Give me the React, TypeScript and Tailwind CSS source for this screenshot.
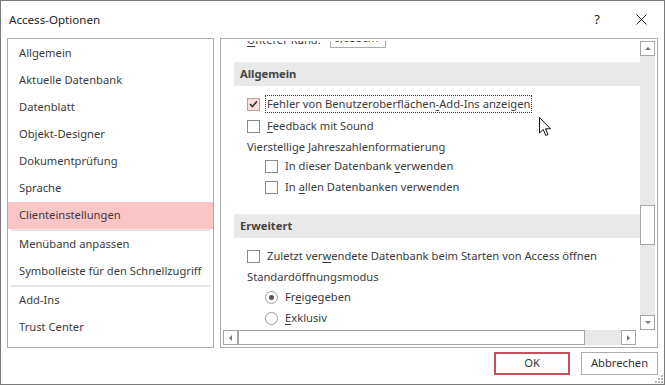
import React from 'react';

const font = { fontFamily: '"Noto Sans", "Open Sans", sans-serif' };

const navGroups: string[][] = [
  ['Allgemein', 'Aktuelle Datenbank', 'Datenblatt', 'Objekt-Designer', 'Dokumentprüfung', 'Sprache', 'Clienteinstellungen'],
  ['Menüband anpassen', 'Symbolleiste für den Schnellzugriff'],
  ['Add-Ins', 'Trust Center'],
];

const Key: React.FC<{ children: React.ReactNode }> = ({ children }) => (
  <span className="underline underline-offset-2">{children}</span>
);

const Checkbox: React.FC<{ checked?: boolean }> = ({ checked }) => (
  <span
    className={`flex h-[13px] w-[13px] shrink-0 items-center justify-center border ${
      checked ? 'border-[#b7a0a0] bg-[#fcdede]' : 'border-[#8a8a8a] bg-white'
    }`}
  >
    {checked && (
      <svg width="9" height="8" viewBox="0 0 9 8">
        <path d="M1 4.2 L3.4 6.5 L8 1.2" fill="none" stroke="#333" strokeWidth="1.6" />
      </svg>
    )}
  </span>
);

const Radio: React.FC<{ checked?: boolean }> = ({ checked }) => (
  <span className="flex h-[13px] w-[13px] shrink-0 items-center justify-center rounded-full border border-[#9a9a9a] bg-white">
    {checked && <span className="h-[5px] w-[5px] rounded-full bg-[#555]" />}
  </span>
);

const SectionHeader: React.FC<{ title: string; className?: string }> = ({ title, className }) => (
  <div className={`flex h-[24px] items-center bg-[#e9e9e9] pl-[6px] font-bold text-[#444] ${className ?? ''}`}>
    {title}
  </div>
);

const ScrollBtn: React.FC<{ dir: 'up' | 'down' | 'left' | 'right' }> = ({ dir }) => {
  const pts = {
    up: '1,5 4,2 7,5',
    down: '1,2 4,5 7,2',
    left: '5,1 2,4 5,7',
    right: '2,1 5,4 2,7',
  }[dir];
  return (
    <div className="flex h-[15px] w-[15px] shrink-0 items-center justify-center border border-[#a6a6a6] bg-white">
      <svg width="7" height="7" viewBox="0 0 7 7">
        <polygon points={pts} fill="#777" />
      </svg>
    </div>
  );
};

export default function App() {
  return (
    <div
      className="relative flex h-[385px] w-[665px] flex-col whitespace-nowrap border border-[#7a7a7a] bg-white text-[11.2px] text-[#3b3b3b]"
      style={font}
    >
      {/* title bar */}
      <div className="flex h-[37px] shrink-0 items-center pl-[8px] text-[#222]">
        <span className="text-[11.6px]">Access-Optionen</span>
        <span className="ml-auto mr-[36px] text-[13px]">?</span>
        <svg className="mr-[17px]" width="11" height="11" viewBox="0 0 11 11">
          <path d="M0.5 0.5 L10.5 10.5 M10.5 0.5 L0.5 10.5" stroke="#222" strokeWidth="1" />
        </svg>
      </div>

      {/* body */}
      <div className="flex h-[310px] shrink-0 pl-[6px]">
        <div className="w-[207px] border border-[#ababab] pt-[1px]">
          {navGroups.map((group, gi) => (
            <div key={gi} className={gi > 0 ? 'mx-[3px] border-t-2 border-[#e6e6e6]' : ''}>
              {group.map((item) => (
                <div
                  key={item}
                  className={`flex h-[27px] items-center pl-[11px] ${
                    item === 'Clienteinstellungen' ? 'bg-[#fcc5c5]' : ''
                  } ${gi > 0 ? '-mx-[3px]' : ''}`}
                >
                  {item}
                </div>
              ))}
            </div>
          ))}
        </div>

        <div className="ml-[6px] flex w-[438px] flex-col border border-[#ababab] p-[2px]">
          <div className="flex min-h-0 flex-1">
            <div className="min-w-0 flex-1 overflow-hidden">
              <div className="-mt-[15px] flex h-[22px] items-center pl-[24px]">
                <span className="mt-[6px]">
                  <Key>U</Key>nterer Rand:
                </span>
                <div className="ml-[9px] flex h-[22px] w-[56px] items-end border border-[#ababab] pl-[3px]">0,635cm</div>
              </div>
              <SectionHeader title="Allgemein" className="ml-[11px] mt-[14px]" />
              <div className="mt-[8px] flex h-[20px] items-center gap-[5px] pl-[24px]">
                <Checkbox checked />
                <span className="border border-dotted border-[#333] px-[1px] leading-[16px]">
                  Fehler von Benutzeroberflächen<Key>-</Key>Add-Ins anzeigen
                </span>
              </div>
              <div className="flex h-[24px] items-center gap-[5px] pl-[24px]">
                <Checkbox />
                <span className="pl-[2px]">
                  <Key>F</Key>eedback mit Sound
                </span>
              </div>
              <div className="flex h-[18px] items-center pl-[24px]">Vierstellige Jahreszahlenformatierung</div>
              <div className="flex h-[20px] items-center gap-[7px] pl-[42px]">
                <Checkbox />
                <span>
                  In dieser Datenbank <Key>v</Key>erwenden
                </span>
              </div>
              <div className="flex h-[22px] items-center gap-[7px] pl-[42px]">
                <Checkbox />
                <span>
                  In <Key>a</Key>llen Datenbanken verwenden
                </span>
              </div>
              <SectionHeader title="Erweitert" className="ml-[11px] mt-[16px]" />
              <div className="mt-[8px] flex h-[20px] items-center gap-[7px] pl-[24px]">
                <Checkbox />
                <span>
                  Zuletzt ver<Key>w</Key>endete Datenbank beim Starten von Access öffnen
                </span>
              </div>
              <div className="flex h-[22px] items-center pl-[24px]">Standardöffnungsmodus</div>
              <div className="flex h-[18px] items-center gap-[7px] pl-[42px]">
                <Radio checked />
                <span>
                  Fr<Key>e</Key>igegeben
                </span>
              </div>
              <div className="flex h-[24px] items-center gap-[7px] pl-[42px]">
                <Radio />
                <span>
                  <Key>E</Key>xklusiv
                </span>
              </div>
            </div>
            {/* vertical scrollbar */}
            <div className="flex w-[15px] shrink-0 flex-col bg-[#e8e8e8]">
              <ScrollBtn dir="up" />
              <div className="mt-[149px] h-[40px] border border-[#a6a6a6] bg-white" />
              <div className="flex-1" />
              <ScrollBtn dir="down" />
            </div>
          </div>
          {/* horizontal scrollbar */}
          <div className="flex h-[15px] shrink-0">
            <div className="flex flex-1 bg-[#e8e8e8]">
              <ScrollBtn dir="left" />
              <div className="h-[15px] w-[347px] border border-[#a6a6a6] bg-white" />
              <div className="flex-1" />
              <ScrollBtn dir="right" />
            </div>
            <div className="w-[19px] shrink-0 bg-white" />
          </div>
        </div>
      </div>

      {/* footer */}
      <div className="relative flex flex-1 items-start justify-end gap-[11px] pr-[6px] pt-[4px]">
        <button className="h-[23px] w-[76px] border-2 border-[#c4505a] bg-white text-[#333]">OK</button>
        <button className="h-[23px] w-[77px] border border-[#ababab] bg-white text-[#333]">Abbrechen</button>
        <svg className="absolute bottom-[1px] right-[1px]" width="8" height="8" viewBox="0 0 8 8">
          <g fill="#b5b5b5">
            <rect x="6" y="0" width="2" height="2" />
            <rect x="3" y="3" width="2" height="2" />
            <rect x="6" y="3" width="2" height="2" />
            <rect x="0" y="6" width="2" height="2" />
            <rect x="3" y="6" width="2" height="2" />
            <rect x="6" y="6" width="2" height="2" />
          </g>
        </svg>
      </div>

      {/* mouse pointer */}
      <svg className="pointer-events-none absolute left-[538px] top-[116px]" width="13" height="20" viewBox="0 0 13 20">
        <path
          d="M0.5 0.5 L0.5 16 L4.2 12.5 L6.8 18.5 L9 17.5 L6.5 11.8 L11.5 11.8 Z"
          fill="white"
          stroke="#111"
          strokeWidth="1"
          strokeLinejoin="round"
        />
      </svg>
    </div>
  );
}
